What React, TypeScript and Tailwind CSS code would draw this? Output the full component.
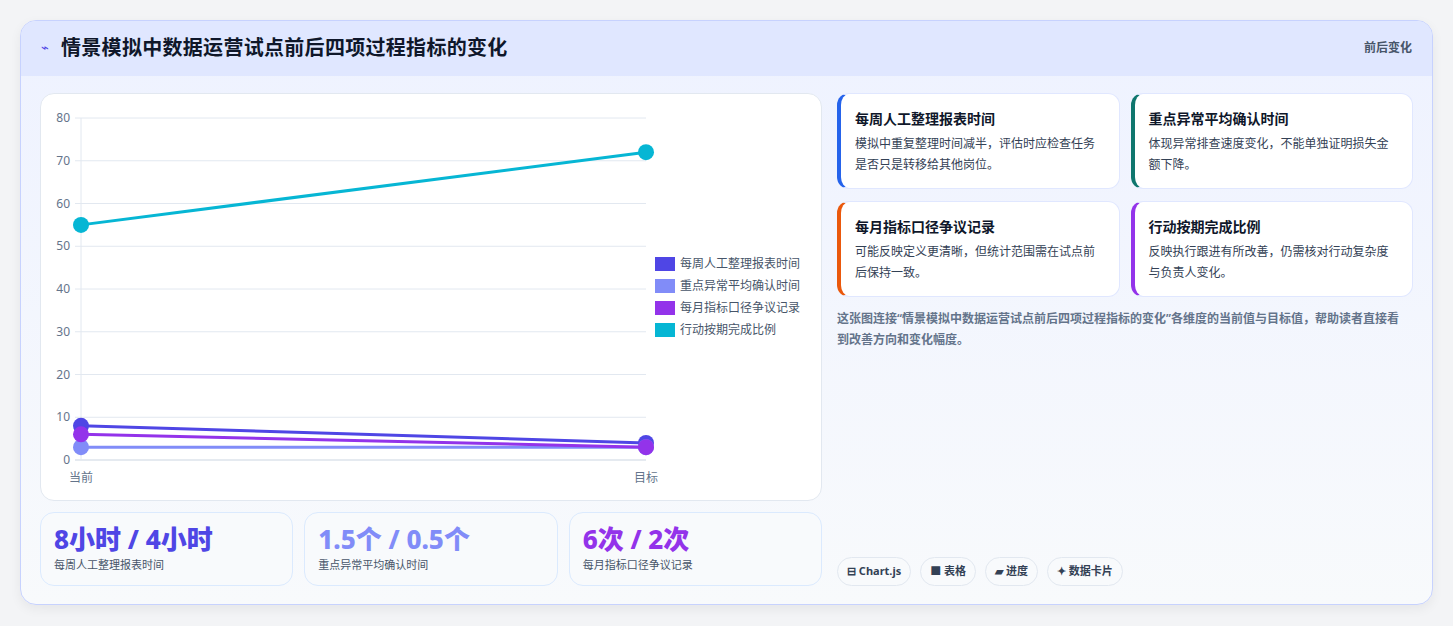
import React from "react";

const F = { fontFamily: '"Noto Sans", "Noto Sans CJK SC", sans-serif' };

const series = [
  { name: "每周人工整理报表时间", c: "#4f46e5", a: 8, b: 4 },
  { name: "重点异常平均确认时间", c: "#818cf8", a: 3, b: 3 },
  { name: "每月指标口径争议记录", c: "#9333ea", a: 6, b: 3 },
  { name: "行动按期完成比例", c: "#06b6d4", a: 55, b: 72 },
];

function Chart() {
  const x0 = 40, x1 = 605, yTop = 24, yBot = 366;
  const y = (v: number) => yBot - ((yBot - yTop) * v) / 80;
  const ticks = [0, 10, 20, 30, 40, 50, 60, 70, 80];
  return (
    <svg width="781" height="407" className="block">
      {ticks.map((t) => (
        <g key={t}>
          <line x1={x0 - 6} x2={x1} y1={y(t)} y2={y(t)} stroke={t === 0 ? "#cbd5e1" : "#e2e8f0"} />
          <text x={x0 - 11} y={y(t) + 4} textAnchor="end" fontSize="12" fill="#64748b">{t}</text>
        </g>
      ))}
      <line x1={x0} x2={x0} y1={yTop} y2={yBot} stroke="#e2e8f0" />
      <text x={x0} y={388} textAnchor="middle" fontSize="12" fill="#64748b">当前</text>
      <text x={x1} y={388} textAnchor="middle" fontSize="12" fill="#64748b">目标</text>
      {series.map((s) => (
        <g key={s.name}>
          <line x1={x0} x2={x1} y1={y(s.a)} y2={y(s.b)} stroke={s.c} strokeWidth="3" />
          <circle cx={x0} cy={y(s.a)} r="8" fill={s.c} />
          <circle cx={x1} cy={y(s.b)} r="8" fill={s.c} />
        </g>
      ))}
      {series.map((s, i) => (
        <g key={s.name + "l"}>
          <rect x={614} y={163 + i * 22} width={20} height={14} fill={s.c} />
          <text x={639} y={174 + i * 22} fontSize="12" fill="#475569">{s.name}</text>
        </g>
      ))}
    </svg>
  );
}

const cards = [
  { t: "每周人工整理报表时间", d: "模拟中重复整理时间减半，评估时应检查任务是否只是转移给其他岗位。", c: "border-l-[#2563eb]" },
  { t: "重点异常平均确认时间", d: "体现异常排查速度变化，不能单独证明损失金额下降。", c: "border-l-[#0f766e]" },
  { t: "每月指标口径争议记录", d: "可能反映定义更清晰，但统计范围需在试点前后保持一致。", c: "border-l-[#ea580c]" },
  { t: "行动按期完成比例", d: "反映执行跟进有所改善，仍需核对行动复杂度与负责人变化。", c: "border-l-[#9333ea]" },
];

const stats = [
  { v: "8小时 / 4小时", l: "每周人工整理报表时间", c: "text-[#4f46e5]" },
  { v: "1.5个 / 0.5个", l: "重点异常平均确认时间", c: "text-[#818cf8]" },
  { v: "6次 / 2次", l: "每月指标口径争议记录", c: "text-[#9333ea]" },
];

export default function App() {
  return (
    <div style={F} className="w-[1453px] h-[626px] bg-[#f3f4f6] pt-[20px] pl-[20px] overflow-hidden">
      <div className="w-[1413px] h-[585px] rounded-[16px] border border-[#c7d2fe] bg-gradient-to-b from-[#eef2ff] to-[#f8fafc] overflow-hidden flex flex-col shadow-[0_4px_12px_rgba(0,0,0,0.06)]">
        <div className="h-[55px] shrink-0 bg-[#e0e7ff] flex items-center justify-between px-[20px] border-b border-[#e0e7ff]">
          <div className="flex items-center gap-[12px]">
            <span className="text-[#4f46e5] text-[13px]">⌁</span>
            <span className="text-[20px] font-bold tracking-[0.3px] text-[#0f172a]">情景模拟中数据运营试点前后四项过程指标的变化</span>
          </div>
          <span className="text-[12px] font-semibold text-[#475569]">前后变化</span>
        </div>
        <div className="flex gap-[15px] px-[19px] pt-[17px]">
          <div className="w-[782px] flex flex-col gap-[11px]">
            <div className="h-[408px] bg-white rounded-[14px] border border-[#e2e8f0]">
              <Chart />
            </div>
            <div className="grid grid-cols-3 gap-[11px]">
              {stats.map((s) => (
                <div key={s.l} className="h-[74px] rounded-[14px] border border-[#dbeafe] bg-[#f8fafc] px-[13px] pt-[8px]">
                  <div className={`text-[26px] font-extrabold leading-[36px] ${s.c}`}>{s.v}</div>
                  <div className="text-[11px] text-[#475569]">{s.l}</div>
                </div>
              ))}
            </div>
          </div>
          <div className="w-[577px] flex flex-col h-[493px]">
            <div className="grid grid-cols-2 gap-x-[11px] gap-y-[12px]">
              {cards.map((c) => (
                <div key={c.t} className={`h-[96px] bg-white rounded-[12px] border border-[#e0e7ff] border-l-[4px] ${c.c} pl-[14px] pr-[16px] pt-[14px]`}>
                  <div className="text-[14px] font-bold text-[#0f172a] leading-[22px]">{c.t}</div>
                  <div className="text-[12px] text-[#334155] leading-[21px] mt-[3px] max-w-[252px]">{c.d}</div>
                </div>
              ))}
            </div>
            <div className="mt-[11px] text-[12px] font-semibold text-[#64748b] leading-[21px] pr-[4px] max-w-[574px]">
              这张图连接“情景模拟中数据运营试点前后四项过程指标的变化”各维度的当前值与目标值，帮助读者直接看到改善方向和变化幅度。
            </div>
            <div className="mt-auto flex gap-[9px]">
              {["⊟ Chart.js", "■ 表格", "▰ 进度", "✦ 数据卡片"].map((t) => (
                <span key={t} className="h-[29px] px-[9px] flex items-center rounded-full border border-[#e2e8f0] bg-[#f8fafc] text-[11px] font-bold text-[#334155]">{t}</span>
              ))}
            </div>
          </div>
        </div>
      </div>
    </div>
  );
}
